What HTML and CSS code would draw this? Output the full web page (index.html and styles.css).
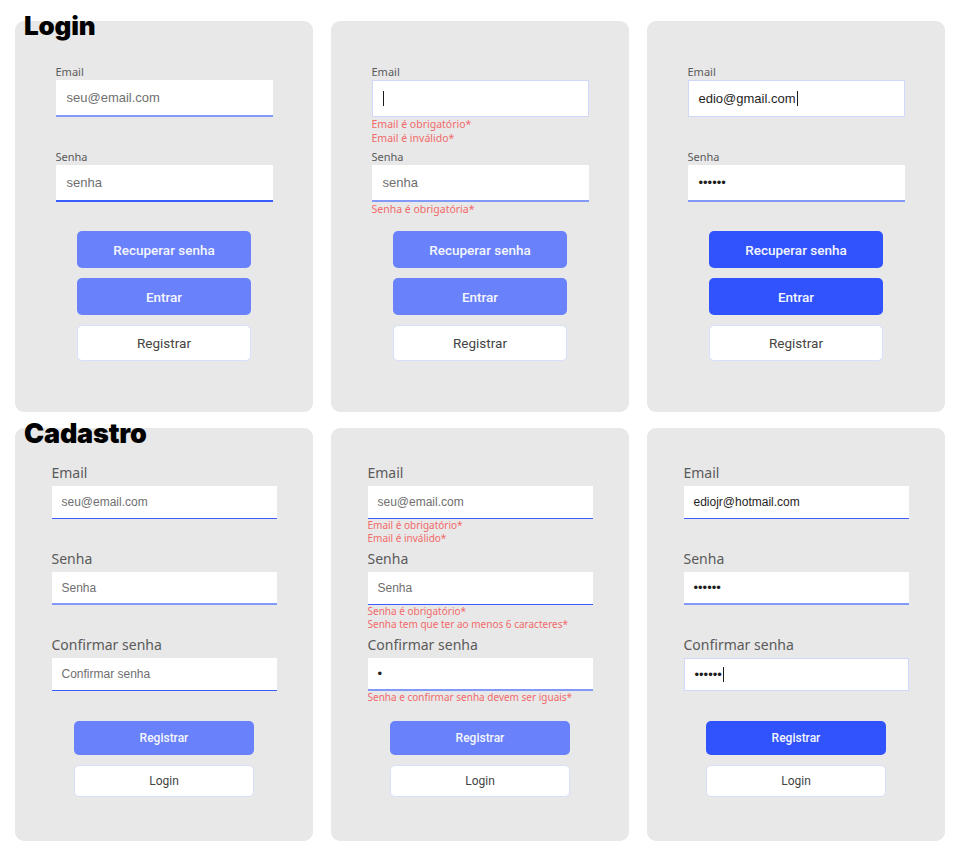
FILE: index.html
```html
<!DOCTYPE html>
<html lang="pt-BR">
<head>
<meta charset="utf-8">
<title>Login e Cadastro</title>
<link rel="stylesheet" href="styles.css">
</head>
<body>
<main class="page">
  <section class="row row-login">
    <h1 class="row-title">Login</h1>

    <div class="card">
      <form class="form">
        <div class="field">
          <label class="label">Email</label>
          <div class="input line-light"><span class="ph">seu@email.com</span></div>
          <div class="errors"></div>
        </div>
        <div class="field">
          <label class="label">Senha</label>
          <div class="input line-dark"><span class="ph">senha</span></div>
          <div class="errors"></div>
        </div>
      </form>
      <div class="actions">
        <button class="btn btn-soft">Recuperar senha</button>
        <button class="btn btn-soft">Entrar</button>
        <button class="btn btn-ghost">Registrar</button>
      </div>
    </div>

    <div class="card">
      <form class="form">
        <div class="field">
          <label class="label">Email</label>
          <div class="input boxed"><span class="caret"></span></div>
          <div class="errors"><p>Email é obrigatório*</p><p>Email é inválido*</p></div>
        </div>
        <div class="field">
          <label class="label">Senha</label>
          <div class="input line-light"><span class="ph">senha</span></div>
          <div class="errors"><p>Senha é obrigatória*</p></div>
        </div>
      </form>
      <div class="actions">
        <button class="btn btn-soft">Recuperar senha</button>
        <button class="btn btn-soft">Entrar</button>
        <button class="btn btn-ghost">Registrar</button>
      </div>
    </div>

    <div class="card">
      <form class="form">
        <div class="field">
          <label class="label">Email</label>
          <div class="input boxed"><span class="val">edio@gmail.com</span><span class="caret"></span></div>
          <div class="errors"></div>
        </div>
        <div class="field">
          <label class="label">Senha</label>
          <div class="input line-light"><span class="val dots">••••••</span></div>
          <div class="errors"></div>
        </div>
      </form>
      <div class="actions">
        <button class="btn btn-strong">Recuperar senha</button>
        <button class="btn btn-strong">Entrar</button>
        <button class="btn btn-ghost">Registrar</button>
      </div>
    </div>
  </section>

  <section class="row row-cadastro">
    <h1 class="row-title">Cadastro</h1>

    <div class="card">
      <form class="form">
        <div class="field">
          <label class="label">Email</label>
          <div class="input line-dark"><span class="ph">seu@email.com</span></div>
          <div class="errors"></div>
        </div>
        <div class="field">
          <label class="label">Senha</label>
          <div class="input line-light"><span class="ph">Senha</span></div>
          <div class="errors"></div>
        </div>
        <div class="field">
          <label class="label">Confirmar senha</label>
          <div class="input line-dark"><span class="ph">Confirmar senha</span></div>
          <div class="errors"></div>
        </div>
      </form>
      <div class="actions">
        <button class="btn btn-soft">Registrar</button>
        <button class="btn btn-ghost">Login</button>
      </div>
    </div>

    <div class="card">
      <form class="form">
        <div class="field">
          <label class="label">Email</label>
          <div class="input line-dark"><span class="ph">seu@email.com</span></div>
          <div class="errors"><p>Email é obrigatório*</p><p>Email é inválido*</p></div>
        </div>
        <div class="field">
          <label class="label">Senha</label>
          <div class="input line-dark"><span class="ph">Senha</span></div>
          <div class="errors"><p>Senha é obrigatório*</p><p>Senha tem que ter ao menos 6 caracteres*</p></div>
        </div>
        <div class="field">
          <label class="label">Confirmar senha</label>
          <div class="input line-light"><span class="val dots">•</span></div>
          <div class="errors"><p>Senha e confirmar senha devem ser iguais*</p></div>
        </div>
      </form>
      <div class="actions">
        <button class="btn btn-soft">Registrar</button>
        <button class="btn btn-ghost">Login</button>
      </div>
    </div>

    <div class="card">
      <form class="form">
        <div class="field">
          <label class="label">Email</label>
          <div class="input line-dark"><span class="val">ediojr@hotmail.com</span></div>
          <div class="errors"></div>
        </div>
        <div class="field">
          <label class="label">Senha</label>
          <div class="input line-light"><span class="val dots">••••••</span></div>
          <div class="errors"></div>
        </div>
        <div class="field">
          <label class="label">Confirmar senha</label>
          <div class="input boxed"><span class="val dots">••••••</span><span class="caret"></span></div>
          <div class="errors"></div>
        </div>
      </form>
      <div class="actions">
        <button class="btn btn-strong">Registrar</button>
        <button class="btn btn-ghost">Login</button>
      </div>
    </div>
  </section>
</main>
</body>
</html>
```

FILE: styles.css
```css
* { box-sizing: border-box; }

body {
  margin: 0;
  background: #ffffff;
  font-family: "Liberation Sans", Arial, sans-serif;
}

.page {
  padding: 21px 0 0 15px;
  display: flex;
  flex-direction: column;
  gap: 16px;
}

.row {
  position: relative;
  display: grid;
  grid-template-columns: repeat(3, 298px);
  column-gap: 18px;
}

.row-title {
  position: absolute;
  left: 9px;
  top: -8px;
  margin: 0;
  font-family: Inter, "Liberation Sans", sans-serif;
  font-weight: 900;
  font-size: 26px;
  line-height: 1;
  letter-spacing: -0.2px;
  color: #000;
  z-index: 1;
}

.row-cadastro .row-title { font-size: 27px; }

.card {
  background: #e8e8e8;
  border-radius: 9px;
  display: flex;
  flex-direction: column;
  align-items: center;
}

.row-login .card { height: 391px; padding-top: 44px; }
.row-cadastro .card { height: 413px; padding-top: 36px; }

.form { display: flex; flex-direction: column; }
.row-login .form { width: 217px; }
.row-cadastro .form { width: 225px; }

.field { display: flex; flex-direction: column; }

.label {
  font-family: "Noto Sans", sans-serif;
  color: #5a5a5a;
}
.row-login .label { font-size: 11px; line-height: 13px; margin-bottom: 2px; }
.row-cadastro .label { font-size: 14px; line-height: 17px; margin-bottom: 5px; }

.input {
  background: #fff;
  display: flex;
  align-items: center;
  padding-left: 11px;
  font-size: 13px;
  white-space: nowrap;
}
.row-login .input { height: 37px; }
.row-cadastro .input { height: 33px; padding-left: 10px; font-size: 12px; }

.line-light { border-bottom: 2px solid #8299f7; }
.line-dark { border-bottom: 2px solid #3b5cff; }
.boxed { border: 1px solid #cfd8fb; padding-left: 10px; }
.row-cadastro .line-dark { border-bottom-width: 1.5px; }

.ph { color: #6f6f6f; }
.val { color: #1e1e1e; }
.dots { font-size: 13px; letter-spacing: 0; }

.caret {
  display: inline-block;
  width: 1px;
  height: 15px;
  background: #1a1a1a;
}
.val + .caret { margin-left: 1px; }

.errors {
  font-family: "Noto Sans", sans-serif;
  color: #f26a6a;
}
.errors p { margin: 0; }
.row-login .errors { font-size: 10.5px; line-height: 13.5px; padding-top: 1px; height: 33px; }
.row-login .field:last-child .errors { height: 29px; }
.row-cadastro .errors { font-size: 10px; line-height: 12.5px; height: 31px; }
.row-cadastro .field:last-child .errors { height: 30px; }

.actions {
  display: flex;
  flex-direction: column;
  align-items: center;
  gap: 10px;
}

.btn {
  border-radius: 5px;
  border: 1px solid transparent;
  font-family: Roboto, "Liberation Sans", sans-serif;
  font-weight: 500;
  cursor: pointer;
}
.row-login .btn { width: 174px; height: 37px; font-size: 13.5px; }
.row-login .btn-ghost { height: 36px; font-weight: 400; }
.row-cadastro .btn { width: 180px; height: 34px; font-size: 12px; }
.row-cadastro .btn-ghost { height: 32px; font-weight: 400; }

.btn-soft { background: #6981fa; color: #f4f6ff; }
.btn-strong { background: #3053fe; color: #f4f6ff; }
.btn-ghost { background: #fff; border-color: #d7dffb; color: #444; }
```
